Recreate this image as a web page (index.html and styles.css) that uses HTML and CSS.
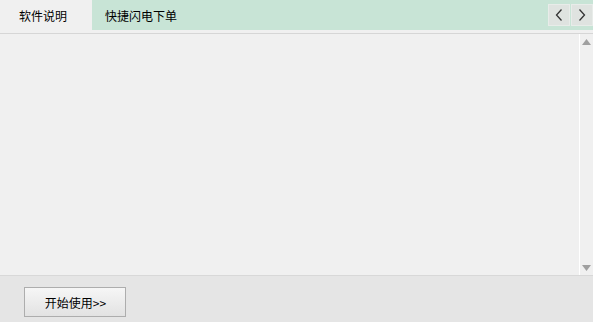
FILE: index.html
```html
<!DOCTYPE html>
<html lang="zh">
<head>
<meta charset="utf-8">
<link rel="stylesheet" href="styles.css">
</head>
<body>
<div class="app">
  <div class="tabbar">
    <div class="tab active">软件说明</div>
    <div class="tab green">快捷闪电下单</div>
    <div class="navs">
      <div class="nav"><svg width="8" height="12" viewBox="0 0 8 12"><path d="M6.5 0.5 L1.5 6 L6.5 11.5" fill="none" stroke="#333" stroke-width="1.3"/></svg></div>
      <div class="nav"><svg width="8" height="12" viewBox="0 0 8 12"><path d="M1.5 0.5 L6.5 6 L1.5 11.5" fill="none" stroke="#333" stroke-width="1.3"/></svg></div>
    </div>
  </div>
  <div class="gap"></div>
  <div class="content">
    <div class="main"></div>
    <div class="scrollbar">
      <svg width="9" height="6" viewBox="0 0 9 6"><path d="M4.5 0 L9 6 L0 6 Z" fill="#a0a0a0"/></svg>
      <svg width="9" height="6" viewBox="0 0 9 6"><path d="M0 0 L9 0 L4.5 6 Z" fill="#a0a0a0"/></svg>
    </div>
  </div>
  <div class="footer">
    <button class="start">开始使用&gt;&gt;</button>
  </div>
</div>
</body>
</html>
```
FILE: styles.css
```css
html, body { margin: 0; padding: 0; }
body {
  width: 593px; height: 322px; overflow: hidden;
  background: #f0f0f0;
  font-family: "Noto Sans CJK SC", "Liberation Sans", sans-serif;
  font-size: 12px; color: #000;
}
.app { display: flex; flex-direction: column; height: 322px; }
.tabbar { display: flex; height: 30px; background: #c8e4d6; }
.tab { display: flex; align-items: center; height: 30px; }
.tab.active { width: 92px; background: #f0f0f0; padding-left: 19px; box-sizing: border-box; }
.tab.green { padding-left: 13px; flex: 1; }
.navs { display: flex; gap: 1px; padding-top: 4px; }
.nav {
  width: 22px; height: 22px; box-sizing: border-box;
  background: #dfe3e0; border: 1px solid #e8ece9;
  display: flex; align-items: center; justify-content: center;
}
.gap { height: 3px; background: #f0f0f0; border-bottom: 1px solid #d6d6d6; }
.content { flex: 1; display: flex; }
.main { flex: 1; background: #f0f0f0; }
.scrollbar {
  width: 13px; background: #f0f0f0; border-left: 1px solid #ffffff;
  display: flex; flex-direction: column; justify-content: space-between; align-items: center;
  padding: 5px 0 4px;
}
.footer {
  height: 47px; background: #e5e5e5; border-top: 1px solid #d8d8d8;
  box-sizing: border-box; padding: 11px 0 0 24px;
}
.start {
  width: 102px; height: 30px; margin: 0;
  border: 1px solid #adadad;
  background: linear-gradient(#f6f6f6, #e2e2e2);
  font-family: "Noto Sans CJK SC", "Liberation Sans", sans-serif;
  font-size: 12px; color: #000; padding: 0 0 0 1px;
}
```
